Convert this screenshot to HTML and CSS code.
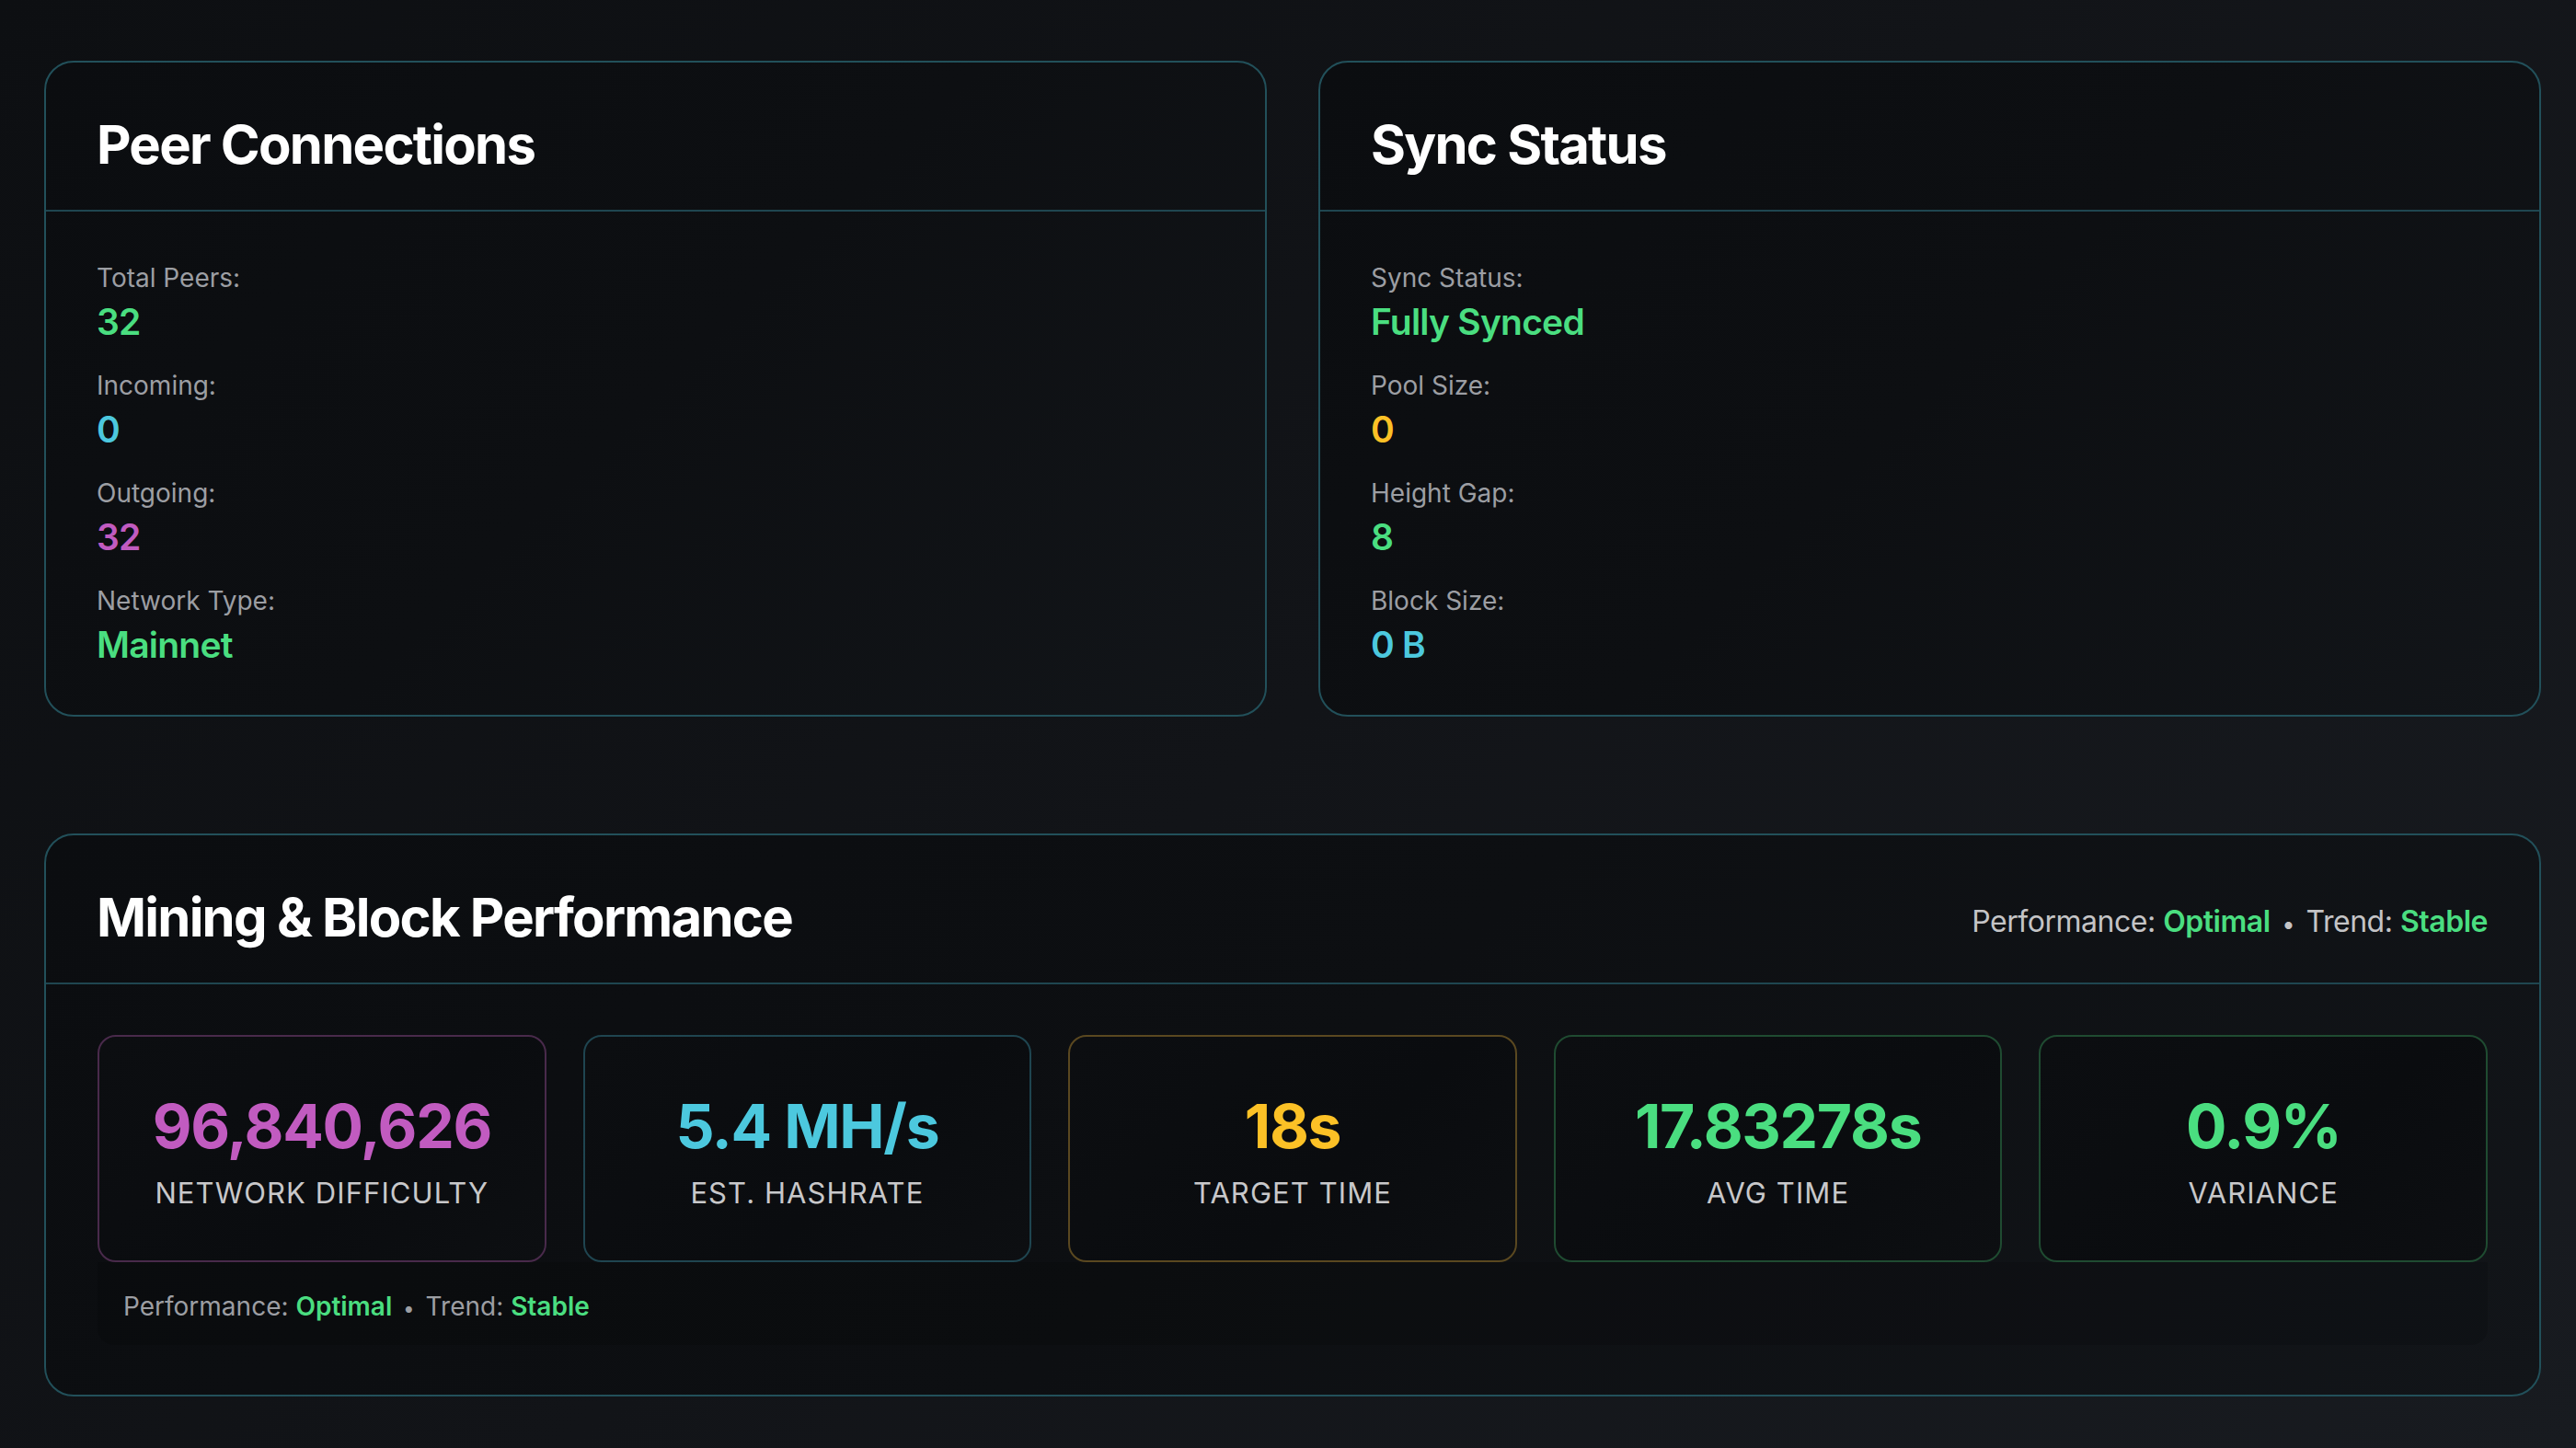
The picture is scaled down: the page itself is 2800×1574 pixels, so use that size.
FILE: index.html
```html
<!DOCTYPE html>
<html lang="en">
<head>
<meta charset="utf-8">
<title>Node Dashboard</title>
<link rel="stylesheet" href="styles.css">
</head>
<body>
<main class="page">
  <section class="grid-two">
    <article class="card">
      <header class="card-header"><h2 class="card-title">Peer Connections</h2></header>
      <div class="card-body">
        <div class="stat-list">
          <div class="row"><div class="label">Total Peers:</div><div class="value green">32</div></div>
          <div class="row"><div class="label">Incoming:</div><div class="value cyan">0</div></div>
          <div class="row"><div class="label">Outgoing:</div><div class="value purple">32</div></div>
          <div class="row"><div class="label">Network Type:</div><div class="value green">Mainnet</div></div>
        </div>
      </div>
    </article>
    <article class="card">
      <header class="card-header"><h2 class="card-title">Sync Status</h2></header>
      <div class="card-body">
        <div class="stat-list">
          <div class="row"><div class="label">Sync Status:</div><div class="value green">Fully Synced</div></div>
          <div class="row"><div class="label">Pool Size:</div><div class="value yellow">0</div></div>
          <div class="row"><div class="label">Height Gap:</div><div class="value green">8</div></div>
          <div class="row"><div class="label">Block Size:</div><div class="value cyan">0 B</div></div>
        </div>
      </div>
    </article>
  </section>

  <article class="card wide">
    <header class="card-header split">
      <h2 class="card-title">Mining &amp; Block Performance</h2>
      <div class="summary">Performance: <span class="strong green">Optimal</span> <span class="dot">•</span> Trend: <span class="strong green">Stable</span></div>
    </header>
    <div class="card-body mining-body">
      <div class="metrics">
        <div class="metric m-purple"><div class="metric-value purple">96,840,626</div><div class="metric-label">Network Difficulty</div></div>
        <div class="metric m-cyan"><div class="metric-value cyan">5.4 MH/s</div><div class="metric-label">Est. Hashrate</div></div>
        <div class="metric m-yellow"><div class="metric-value yellow">18s</div><div class="metric-label">Target Time</div></div>
        <div class="metric m-green"><div class="metric-value green">17.83278s</div><div class="metric-label">Avg Time</div></div>
        <div class="metric m-green"><div class="metric-value green">0.9%</div><div class="metric-label">Variance</div></div>
      </div>
      <div class="footer-bar">Performance: <span class="strong green">Optimal</span> <span class="dot">•</span> Trend: <span class="strong green">Stable</span></div>
    </div>
  </article>
</main>
</body>
</html>
```

FILE: styles.css
```css
* { box-sizing: border-box; }

html, body {
  margin: 0;
  padding: 0;
}

body {
  min-height: 100vh;
  background: linear-gradient(135deg, #0d0f12 0%, #121418 50%, #181b20 100%);
  font-family: "Inter", "Liberation Sans", sans-serif;
  color: #ffffff;
}

.page {
  padding: 66px 38px 40px 48px;
}

.grid-two {
  display: grid;
  grid-template-columns: 1fr 1fr;
  gap: 56px;
}

.card {
  border: 2px solid #22505a;
  border-radius: 32px;
  background: linear-gradient(135deg, #0b0d10 0%, #0d0f12 50%, #121519 100%);
  overflow: hidden;
}

.card.wide {
  margin-top: 127px;
}

.card-header {
  padding: 53px 56px 35px 55px;
  border-bottom: 2px solid #1f4650;
}

.card-header.split {
  display: flex;
  justify-content: space-between;
  align-items: center;
}

.card-title {
  margin: 0;
  font-size: 58px;
  line-height: 72px;
  font-weight: 700;
  letter-spacing: -0.03em;
  color: #ffffff;
}

.summary {
  font-size: 32px;
  line-height: 44px;
  padding-top: 12px;
  color: #c4c4c6;
  letter-spacing: -0.015em;
}

.strong { font-weight: 600; }

.dot { font-size: 0.8em; padding: 0 4px; }

.card-body {
  padding: 52px 56px 48px 55px;
}

.stat-list {
  display: flex;
  flex-direction: column;
  gap: 21px;
}

.label {
  font-size: 28px;
  line-height: 40px;
  color: #9c9ea3;
}

.value {
  font-size: 39px;
  line-height: 56px;
  font-weight: 600;
  letter-spacing: -0.02em;
}

.green { color: #4ade80; }
.cyan { color: #4cc8de; }
.purple { color: #c15bc0; }
.yellow { color: #fcc126; }

.mining-body {
  padding: 55px 56px 54px;
}

.metrics {
  display: grid;
  grid-template-columns: repeat(5, 1fr);
  gap: 40px;
}

.metric {
  border: 2px solid #1f4650;
  border-radius: 20px;
  background: linear-gradient(135deg, #0c0e11 0%, #0a0c0f 60%, #0d0f12 100%);
  padding: 61px 16px 53px;
  display: flex;
  flex-direction: column;
  align-items: center;
  gap: 17px;
}

.m-purple { border-color: #492a4b; }
.m-cyan { border-color: #1f4550; }
.m-yellow { border-color: #5a4820; }
.m-green { border-color: #1f4b31; }

.metric-value {
  font-size: 66px;
  line-height: 72px;
  font-weight: 700;
  letter-spacing: -0.02em;
}

.metric-label {
  font-size: 31px;
  line-height: 40px;
  text-transform: uppercase;
  letter-spacing: 0.035em;
  color: #c8c8ca;
}

.footer-bar {
  background: rgba(0, 0, 0, 0.12);
  border-radius: 0 0 18px 18px;
  padding: 28px 28px 20px;
  font-size: 28px;
  line-height: 40px;
  color: #9c9ea3;
}
```
